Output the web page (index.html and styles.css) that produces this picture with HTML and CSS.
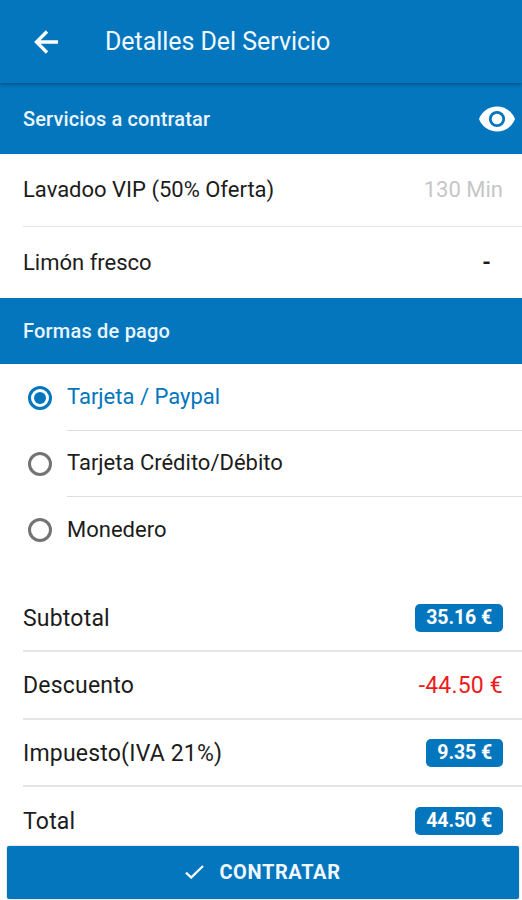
FILE: index.html
```html
<!DOCTYPE html>
<html lang="es">
<head>
    <meta charset="UTF-8">
    <meta name="viewport" content="width=device-width, initial-scale=1.0">
    <title>Detalles Del Servicio</title>
    <link rel="stylesheet" href="styles.css">
</head>
<body>

    <header class="toolbar">
        <svg class="back" viewBox="0 0 25 24"><path d="M24 12H3M13 1.500L2.500 12 13 22.500" /></svg>
        <h1>Detalles Del Servicio</h1>
    </header>

    <main class="content">
        <h2 class="list-header first">
            <span>Servicios a contratar</span>
            <svg class="eye" viewBox="0 0 36 26">
                <path fill="#fff" d="M18 0.500C9.800 0.500 2.800 5.600 0 13c2.800 7.400 9.800 12.500 18 12.500s15.200-5.100 18-12.500C33.200 5.600 26.200 0.500 18 0.500z" />
                <circle cx="18" cy="13" r="6.700" fill="#fff" stroke="#0376be" stroke-width="2.800" />
            </svg>
        </h2>
        <div class="list services">
            <div class="item">
                <span>Lavadoo VIP (50% Oferta)</span>
                <span class="note">130 Min</span>
            </div>
            <div class="item">
                <span>Limón fresco</span>
                <span class="dash">-</span>
            </div>
        </div>

        <h2 class="list-header">Formas de pago</h2>
        <div class="list payments">
            <label class="option">
                <input type="radio" name="pago" checked>
                <span class="label">Tarjeta / Paypal</span>
            </label>
            <label class="option">
                <input type="radio" name="pago">
                <span class="label">Tarjeta Crédito/Débito</span>
            </label>
            <label class="option">
                <input type="radio" name="pago">
                <span class="label">Monedero</span>
            </label>
        </div>

        <div class="list totals">
            <div class="item">
                <span class="name">Subtotal</span>
                <span class="badge">35.16 €</span>
            </div>
            <div class="item">
                <span class="name">Descuento</span>
                <span class="discount">-44.50 €</span>
            </div>
            <div class="item">
                <span class="name">Impuesto(IVA 21%)</span>
                <span class="badge">9.35 €</span>
            </div>
            <div class="item">
                <span class="name">Total</span>
                <span class="badge">44.50 €</span>
            </div>
        </div>
    </main>

    <footer class="footer">
        <button type="button">
            <svg class="check" viewBox="0 0 19 14"><path d="M1 7.600l5.200 5L18 1" /></svg>
            <span>CONTRATAR</span>
        </button>
    </footer>

</body>
</html>
```
FILE: styles.css
```css
* {
    box-sizing: border-box;
}

body {
    margin: 0;
    height: 900px;
    display: flex;
    flex-direction: column;
    overflow: hidden;
    background: #fff;
    color: #1c1c1c;
    font-family: Roboto, "Liberation Sans", sans-serif;
    font-size: 22px;
}

h1, h2 {
    margin: 0;
    font-weight: 500;
}

.toolbar {
    flex: none;
    height: 83px;
    padding: 0 34px;
    display: flex;
    align-items: center;
    gap: 46px;
    background: #0376be;
    color: #f1f8ff;
    box-shadow: 0 1px 4px rgba(0, 0, 0, 0.4);
    z-index: 1;
}

.toolbar h1 {
    padding-bottom: 1px;
    font-size: 25px;
    font-weight: 400;
    letter-spacing: -0.05px;
}

.back {
    width: 25px;
    height: 24px;
    fill: none;
    stroke: #fff;
    stroke-width: 3.3;
}

.content {
    flex: 1;
    min-height: 0;
    overflow: hidden;
}

.list-header {
    height: 66px;
    padding: 0 7px 0 23px;
    display: flex;
    align-items: center;
    justify-content: space-between;
    background: #0376be;
    color: #eaf5ff;
    font-size: 20px;
    letter-spacing: 0.2px;
}

.list-header.first {
    height: 71px;
    letter-spacing: 0.12px;
}

.eye {
    width: 36px;
    height: 26px;
}

.list {
    padding-left: 23px;
}

.item {
    display: flex;
    align-items: center;
    justify-content: space-between;
    padding-right: 19px;
    border-bottom: 2px solid #e5e5e5;
}

.item:last-child {
    border-bottom: none;
}

.services .item {
    height: 73px;
    padding-bottom: 1px;
    border-bottom-width: 1px;
}

.services .item:last-child {
    height: 71px;
}

.note {
    color: #c6c6c6;
}

.dash {
    padding-right: 12px;
    font-weight: 700;
}

.payments {
    padding-left: 28px;
}

.option {
    height: 66px;
    display: flex;
    align-items: center;
}

.option input {
    appearance: none;
    flex: none;
    width: 24px;
    height: 24px;
    margin: 2px 15px 0 0;
    padding: 3px;
    border: 3px solid #737373;
    border-radius: 50%;
}

.option input:checked {
    border-color: #0376be;
    background: #0376be content-box;
}

.option input:checked + .label {
    color: #0376be;
}

.label {
    flex: 1;
    height: 67px;
    display: flex;
    align-items: center;
    border-bottom: 1px solid #dedede;
}

.option:last-child .label {
    border-bottom: none;
}

.totals {
    margin-top: 22.5px;
}

.totals .item {
    height: 67.5px;
}

.name, .discount {
    padding-top: 2px;
    font-size: 23px;
    letter-spacing: 0.2px;
}

.discount {
    color: #ec1c1c;
}

.badge {
    height: 28px;
    margin-top: 1px;
    padding: 0 11px;
    border-radius: 5px;
    background: #0376be;
    color: #fff;
    font-size: 19.5px;
    font-weight: 700;
    line-height: 27px;
    letter-spacing: -0.1px;
}

.footer {
    flex: none;
    height: 54px;
    padding: 0 3px 1px 7px;
}

.footer button {
    width: 100%;
    height: 53px;
    display: flex;
    align-items: center;
    justify-content: center;
    gap: 15px;
    padding: 0 0 2px;
    border: none;
    border-radius: 2px;
    background: #0376be;
    color: #f1f8ff;
    font-family: inherit;
    font-size: 20px;
    font-weight: 700;
    letter-spacing: 0.6px;
    box-shadow: 0 0 2px rgba(0, 0, 0, 0.3);
}

.check {
    width: 19px;
    height: 14px;
    fill: none;
    stroke: #fff;
    stroke-width: 2.2;
}
```
